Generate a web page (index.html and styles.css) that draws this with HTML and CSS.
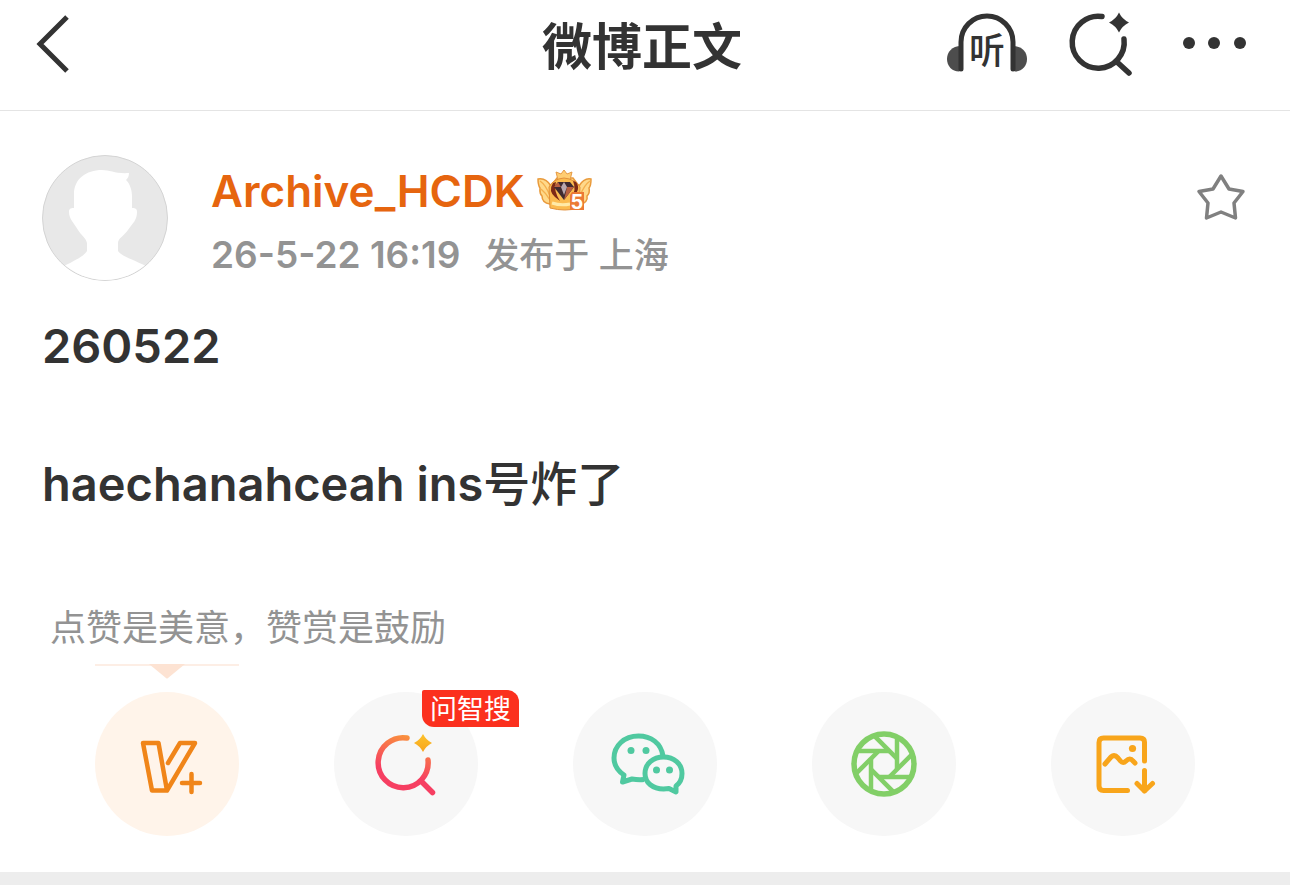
FILE: index.html
```html
<!DOCTYPE html>
<html lang="zh-CN">
<head>
	<meta charset="UTF-8">
	<meta name="viewport" content="width=device-width, initial-scale=1">
	<title>微博正文</title>
	<link rel="stylesheet" href="styles.css">
</head>
<body>
	<header class="topbar">
		<div class="topbar-left">
			<button type="button" class="icon-btn" aria-label="返回">
				<svg width="36" height="60" viewBox="0 0 36 60" fill="none" stroke="#333" stroke-width="5"><path d="M31 3L4 30L31 57"/></svg>
			</button>
		</div>
		<h1>微博正文</h1>
		<div class="topbar-right">
			<button type="button" class="icon-btn" aria-label="听微博">
				<svg width="82" height="66" viewBox="0 0 82 66">
					<path d="M15 35C6 35 1 41 1 48S6 60.500 13 60.500L17 57V35Z" fill="#4d4d4d"/>
					<path d="M67 35C76 35 81 41 81 48S76 60.500 69 60.500L65 57V35Z" fill="#4d4d4d"/>
					<path d="M15 58V31a26 26 0 0 1 52 0V58" fill="none" stroke="#333" stroke-width="5" stroke-linecap="round"/>
					<text class="listen" x="41" y="53" text-anchor="middle">听</text>
				</svg>
			</button>
			<button type="button" class="icon-btn" aria-label="智搜">
				<svg width="66" height="66" viewBox="0 0 66 66">
					<path d="M34 5.500A26 26 0 1 0 56 28M49 51L61 62" fill="none" stroke="#333" stroke-width="5.500" stroke-linecap="round"/>
					<path d="M51 1.500Q54 8 61 11.500Q54 15 51 21.500Q48 15 41 11.500Q48 8 51 1.500Z" fill="#333"/>
				</svg>
			</button>
			<button type="button" class="icon-btn" aria-label="更多">
				<svg width="74" height="66" viewBox="0 0 74 66" fill="#333"><circle cx="15" cy="32" r="6"/><circle cx="40" cy="32" r="6"/><circle cx="66" cy="32" r="6"/></svg>
			</button>
		</div>
	</header>

	<main>
		<article class="post">
			<div class="author">
				<svg class="avatar" viewBox="0 0 126 126" role="img" aria-label="头像">
					<defs><clipPath id="round"><circle cx="63" cy="63" r="62"/></clipPath></defs>
					<circle cx="63" cy="63" r="62.500" fill="#e8e8e8" stroke="#d4d4d4"/>
					<path clip-path="url(#round)" fill="#fff" d="M32 53V39C32 24 44 15 60 15C68 15 74 19 87 18C87 21 86 23 84 25C88 29 90 35 90 42V53C94 53 95 54 95 57C95 65 91 68 86 75C82 81 76 83 76 88V96C79 101 92 105 104 111V126H22V111C34 105 42 101 45 96V88C44 83 39 80 36 75C32 68 27 64 27 57C27 54 28 53 32 53Z"/>
				</svg>
				<div class="author-info">
					<div class="author-line">
						<a class="name" href="#">Archive_HCDK</a>
						<svg class="crown" width="56" height="44" viewBox="0 0 56 44" role="img" aria-label="5级会员">
							<path d="M13 35C6 34 5 30 5 27C2 24 3 21 3 19C1 16 1 13 1 10C6 9 11 12 14 17L20 9H36L42 17C45 12 49 9 54 10C54 14 54 17 52 19C53 23 52 25 50 27C51 31 48 35 43 35Z" fill="#ffd98a" stroke="#e99a3c" stroke-width="1.500"/>
							<path d="M3 12Q9 16 13 27M4 20Q9 24 13 31M53 12Q47 16 43 27" fill="none" stroke="#f5b04e" stroke-width="1.500"/>
							<path d="M19 3L24 5L27 1L30 5L35 3L33 11H21Z" fill="#ffcd72" stroke="#e69a45"/>
							<path d="M13 39L12 18Q16 10 27 9Q38 10 43 18L42 39Q28 43 13 39Z" fill="#fbbb50" stroke="#e2903a"/>
							<path d="M16 14Q11 22 18 28L23 32Q16 21 19 13M39 13Q45 21 34 29Q40 21 36 12" fill="#7d2a17"/>
							<path d="M21 13H33L37 18L27 31L17 18Z" fill="#3f2a30"/>
							<path d="M21 13L24 18H17ZM27 31L30 18L37 18Z" fill="#b85f40"/>
							<path d="M24 18L27 13L30 18L27 26Z" fill="#b9a7ae"/>
							<path d="M15 34Q24 37 33 35" fill="none" stroke="#ffeaa8" stroke-width="3"/>
							<path d="M35 23H47V41H33V26Z" fill="#ec7a35"/>
							<text class="level" x="40" y="40" text-anchor="middle">5</text>
						</svg>
					</div>
					<p class="meta"><time>26-5-22 16:19</time><span>发布于 上海</span></p>
				</div>
				<button type="button" class="icon-btn favorite" aria-label="收藏">
					<svg width="50" height="50" viewBox="0 0 50 50" fill="none" stroke="#808080" stroke-width="3.500" stroke-linejoin="round"><path d="M25 4L33 17L47 19.500L38 31L39.500 46L25 40L10.500 46L12 31L3 19.500L17 17Z"/></svg>
				</button>
			</div>

			<div class="content">260522

haechanahceah ins<span class="han">号炸了</span></div>
			<p class="tip">点赞是美意，赞赏是鼓励</p>
		</article>

		<div class="actions">
			<div class="action">
				<svg class="pointer" viewBox="0 0 144 15"><path d="M0 0H144V2H0Z" fill="#fdeee5"/><path d="M54 0H90L73 14Q72 15 71 14Z" fill="#fde3d3"/></svg>
				<button type="button" class="circle reward" aria-label="赞赏">
					<svg viewBox="0 0 144 144" fill="none" stroke="#f08519" stroke-width="4.500" stroke-linecap="round" stroke-linejoin="round">
						<path d="M73 71L85 51H100L72 98.500L63.500 51H48L57 98.500H72M87 91H105M96.500 82V100"/>
					</svg>
				</button>
			</div>
			<div class="action">
				<button type="button" class="circle" aria-label="问智搜">
					<svg viewBox="0 0 144 144">
						<defs>
							<linearGradient id="search" gradientUnits="userSpaceOnUse" x1="82" y1="43" x2="70" y2="82"><stop offset="0" stop-color="#fa983b"/><stop offset="1" stop-color="#f63f62"/></linearGradient>
							<linearGradient id="spark" x1="0" y1="0" x2="0" y2="1"><stop offset="0" stop-color="#fcc22c"/><stop offset="1" stop-color="#f8a51e"/></linearGradient>
						</defs>
						<path d="M73 46A25 25 0 1 0 94 68M88 90L98.500 100.500" fill="none" stroke="url(#search)" stroke-width="5.500" stroke-linecap="round"/>
						<path d="M89 42Q92 48 98 51Q92 54 89 60Q86 54 80 51Q86 48 89 42Z" fill="url(#spark)"/>
					</svg>
					<span class="badge">问智搜</span>
				</button>
			</div>
			<div class="action">
				<button type="button" class="circle" aria-label="微信">
					<svg viewBox="0 0 144 144">
						<g fill="none" stroke="#50c9a0" stroke-width="5" stroke-linejoin="round">
							<path d="M90 64C88 51 78 44 65.500 44C51 44 41 54 41 66C41 73 45 79 51 83L49.500 90L59 87Q65 88 71 87.500"/>
							<path d="M103 94C107 91 109 87 109 81.500C109 72 101 65 90.500 65S72 72 72 81.500S80 97 90.500 97L96 96.500L103 100Z"/>
						</g>
						<g fill="#50c9a0"><circle cx="58" cy="58.500" r="3.500"/><circle cx="73" cy="58.500" r="3.500"/><circle cx="83.500" cy="78" r="3.500"/><circle cx="96.500" cy="78" r="3.500"/></g>
					</svg>
				</button>
			</div>
			<div class="action">
				<button type="button" class="circle" aria-label="朋友圈">
					<svg viewBox="0 0 144 144">
						<defs><path id="blade" d="M-27 -13H5.400"/></defs>
						<g transform="translate(72 72)" fill="none" stroke="#82cf67" stroke-width="4.500">
							<circle r="30" stroke-width="5.500"/>
							<use href="#blade"/>
							<use href="#blade" transform="rotate(45)"/>
							<use href="#blade" transform="rotate(90)"/>
							<use href="#blade" transform="rotate(135)"/>
							<use href="#blade" transform="rotate(180)"/>
							<use href="#blade" transform="rotate(225)"/>
							<use href="#blade" transform="rotate(270)"/>
							<use href="#blade" transform="rotate(315)"/>
						</g>
					</svg>
				</button>
			</div>
			<div class="action">
				<button type="button" class="circle" aria-label="保存图片">
					<svg viewBox="0 0 144 144">
						<path d="M93.500 69V50Q93.500 46 89 46H52.500Q48 46 48 50.500V94Q48 98.500 52.500 98.500H76.500M54 72L60 65Q63.500 62 67 66L69.500 69Q72 72 75 69Q79 65 82 69L84 71M93.500 78.500V99M86 91.500L93.500 99L101.500 91.500" fill="none" stroke="#f8a51b" stroke-width="5" stroke-linecap="round" stroke-linejoin="round"/>
						<circle cx="81.500" cy="56.500" r="3.600" fill="#f8a51b"/>
					</svg>
				</button>
			</div>
		</div>
	</main>
	<div class="divider"></div>
</body>
</html>
```
FILE: styles.css
```css
*{ box-sizing: border-box; }
body,h1,p{ margin: 0; }
body{ background: #fff; color: #333; font-family: Inter,"Noto Sans CJK SC",sans-serif; }
button{ padding: 0; border: 0; background: none; font: inherit; cursor: pointer; }
svg{ display: block; }

/* 顶部导航 */
.topbar{ display: grid; grid-template-columns: 1fr auto 1fr; align-items: center; height: 111px; padding: 0 42px 22px 36px; border-bottom: 1px solid #e4e4e4; }
.topbar h1{ font-size: 50px; line-height: 60px; font-weight: 700; padding-top: 6px; }
.topbar-left{ padding-top: 4px; }
.topbar-right{ display: flex; justify-content: flex-end; gap: 40px; }
.listen{ font-size: 36px; font-weight: 500; fill: #333; }

/* 微博内容 */
.post{ padding: 44px 44px 0 42px; }
.author{ display: flex; align-items: flex-start; }
.avatar{ width: 126px; height: 126px; flex: none; }
.author-info{ flex: 1; padding: 8px 0 0 43px; }
.author-line{ display: flex; align-items: center; gap: 12px; }
.name{ color: #e6650f; font-size: 44px; line-height: 56px; font-weight: 600; text-decoration: none; }
.level{ font-size: 20px; font-weight: 700; fill: #fff; }
.meta{ display: flex; align-items: center; gap: 24px; margin-top: 10px; color: #939393; font-size: 35px; line-height: 52px; font-weight: 500; }
.meta time{ font-size: 37px; font-weight: 600; }
.favorite{ margin-top: 17px; }
.content{ margin-top: 30px; font-size: 47px; line-height: 69px; font-weight: 600; white-space: pre-line; }
.han{ font-weight: 500; }
.tip{ margin: 90px 0 0 8px; color: #939393; font-size: 36px; line-height: 40px; }

/* 底部操作 */
.actions{ display: flex; justify-content: space-evenly; align-items: flex-end; padding: 16px 0 36px; }
.pointer{ width: 144px; height: 15px; margin-bottom: 13px; }
.circle{ position: relative; display: block; width: 144px; height: 144px; border-radius: 50%; background: #f7f7f7; }
.reward{ background: #fff4ea; }
.badge{ position: absolute; top: -2px; left: 88px; width: 97px; height: 37px; padding-top: 2px; border-radius: 2px 12px 0 12px; background: #fb301e; color: #fff; font-size: 27px; line-height: 36px; font-weight: 400; text-align: center; }
.divider{ height: 13px; background: #ededed; }
```
